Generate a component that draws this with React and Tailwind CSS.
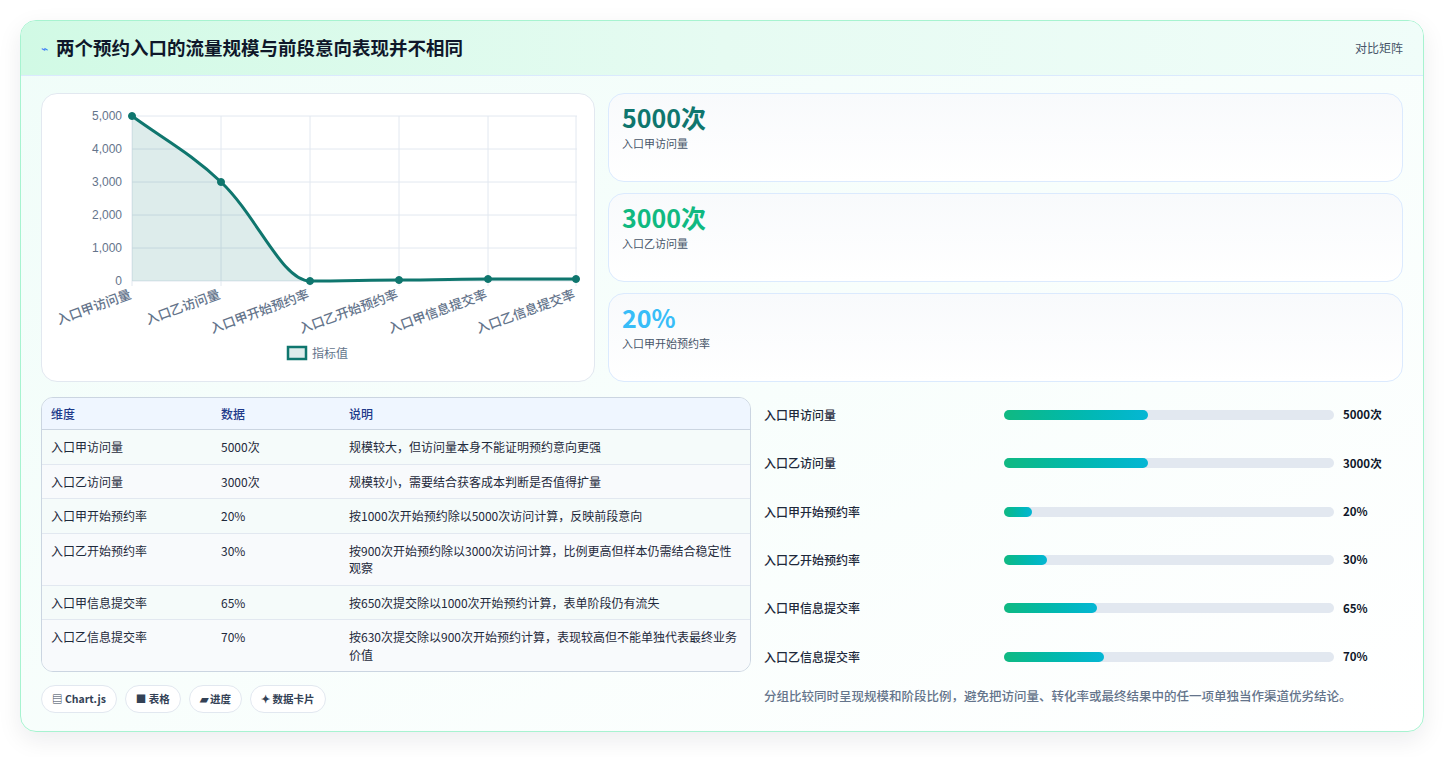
const font = { fontFamily: '"Noto Sans CJK SC", "Noto Sans", sans-serif' };

const kpis = [
  { value: '5000次', label: '入口甲访问量', color: 'text-[#0f766e]' },
  { value: '3000次', label: '入口乙访问量', color: 'text-[#10b981]' },
  { value: '20%', label: '入口甲开始预约率', color: 'text-[#38bdf8]' },
];

const rows = [
  ['入口甲访问量', '5000次', '规模较大，但访问量本身不能证明预约意向更强'],
  ['入口乙访问量', '3000次', '规模较小，需要结合获客成本判断是否值得扩量'],
  ['入口甲开始预约率', '20%', '按1000次开始预约除以5000次访问计算，反映前段意向'],
  ['入口乙开始预约率', '30%', '按900次开始预约除以3000次访问计算，比例更高但样本仍需结合稳定性观察'],
  ['入口甲信息提交率', '65%', '按650次提交除以1000次开始预约计算，表单阶段仍有流失'],
  ['入口乙信息提交率', '70%', '按630次提交除以900次开始预约计算，表现较高但不能单独代表最终业务价值'],
];

const bars = [
  ['入口甲访问量', '5000次', 144],
  ['入口乙访问量', '3000次', 144],
  ['入口甲开始预约率', '20%', 28],
  ['入口乙开始预约率', '30%', 43],
  ['入口甲信息提交率', '65%', 93],
  ['入口乙信息提交率', '70%', 100],
];

function Chart() {
  const xs = [90, 179, 268, 357, 446, 534];
  const ys = [22, 88, 187, 186, 185, 185];
  const labels = ['入口甲访问量', '入口乙访问量', '入口甲开始预约率', '入口乙开始预约率', '入口甲信息提交率', '入口乙信息提交率'];
  const line = 'M90 22 C120 44 150 60 179 88 C215 122 240 187 268 187 C300 187 330 186 357 186 C390 186 420 185 446 185 L534 185';
  return (
    <svg width="553" height="288" className="block">
      {[0, 1, 2, 3, 4, 5].map((i) => (
        <g key={i}>
          <line x1="90" x2="535" y1={22 + i * 33} y2={22 + i * 33} stroke="#e2e8f0" />
          <line x1={xs[i]} x2={xs[i]} y1="22" y2="192" stroke="#e2e8f0" />
          <text x="80" y={26 + i * 33} textAnchor="end" fontSize="12" fill="#64748b" fontFamily="Liberation Sans, sans-serif">
            {['5,000', '4,000', '3,000', '2,000', '1,000', '0'][i]}
          </text>
          <text
            x={xs[i]}
            y="204"
            textAnchor="end"
            fontSize="13"
            fontWeight="500"
            fill="#64748b"
            fontFamily='"Noto Sans CJK SC", sans-serif'
            transform={`rotate(-20 ${xs[i]} 204)`}
          >
            {labels[i]}
          </text>
        </g>
      ))}
      <path d={line + ' L534 187 L90 187 Z'} fill="#0f766e" fillOpacity="0.14" />
      <path d={line} fill="none" stroke="#0f766e" strokeWidth="3" />
      {xs.map((x, i) => (
        <circle key={x} cx={x} cy={ys[i]} r="3.5" fill="#0f766e" stroke="#0f766e" strokeWidth="1" />
      ))}
      <rect x="246" y="253" width="18" height="12" fill="#0f766e" fillOpacity="0.14" stroke="#0f766e" strokeWidth="2.5" />
      <text x="270" y="264" fontSize="12" fill="#64748b" fontFamily='"Noto Sans CJK SC", sans-serif'>指标值</text>
    </svg>
  );
}

export default function App() {
  return (
    <div className="w-[1444px] h-[757px] bg-white p-5 pb-0" style={font}>
      <div className="rounded-2xl border border-[#a7f3d0] overflow-hidden shadow-[0_8px_24px_rgba(15,23,42,0.08)] bg-gradient-to-br from-[#f0fdf9] to-white">
        <div className="h-[55px] flex items-center justify-between px-5 bg-gradient-to-r from-[#d1fae5] via-[#e6fbf2] to-[#f0fdf9] border-b border-[#dbeafe]">
          <div className="flex items-center gap-2">
            <span className="text-[#3b82f6] text-xs">⌁</span>
            <h1 className="text-[18.5px] font-bold text-[#0f172a]">两个预约入口的流量规模与前段意向表现并不相同</h1>
          </div>
          <span className="text-xs text-[#475569]">对比矩阵</span>
        </div>
        <div className="px-5 pt-[17px] pb-[18px]">
          <div className="flex gap-[13px]">
            <div className="w-[554px] h-[289px] rounded-2xl border border-[#e2e8f0] bg-white overflow-hidden">
              <Chart />
            </div>
            <div className="flex-1 flex flex-col gap-[11px]">
              {kpis.map((k) => (
                <div key={k.label} className="h-[89px] rounded-2xl border border-[#dbeafe] bg-gradient-to-b from-[#f8fafc] to-white px-[13px] pt-[5px]">
                  <div className={`text-[25px] font-bold leading-[36px] ${k.color}`}>{k.value}</div>
                  <div className="text-[11px] text-[#475569]">{k.label}</div>
                </div>
              ))}
            </div>
          </div>
          <div className="flex gap-[13px] mt-[15px]">
            <div className="w-[710px]">
              <div className="rounded-xl border border-[#cbd5e1] overflow-hidden text-xs bg-[#f8fafc]">
                <div className="flex h-[32px] items-center bg-[#eff6ff] border-b border-[#cbd5e1] text-[#1e3a8a] font-medium">
                  <div className="w-[179px] pl-[9px]">维度</div>
                  <div className="w-[128px]">数据</div>
                  <div className="flex-1">说明</div>
                </div>
                {rows.map((r, i) => (
                  <div key={r[0]} className={`flex py-[8px] leading-[17.5px] text-[#1e293b] ${i % 2 ? 'bg-[#f8fafc]' : 'bg-[#f5fbfa]'} ${i < 5 ? 'border-b border-[#e2e8f0]' : ''}`}>
                    <div className="w-[179px] pl-[9px] shrink-0">{r[0]}</div>
                    <div className="w-[128px] shrink-0">{r[1]}</div>
                    <div className="flex-1 pr-3">{r[2]}</div>
                  </div>
                ))}
              </div>
              <div className="flex gap-2 mt-[13px]">
                {['▤ Chart.js', '■ 表格', '▰ 进度', '✦ 数据卡片'].map((c) => (
                  <span key={c} className="h-[28px] px-[10px] flex items-center rounded-full border border-[#e2e8f0] bg-white text-[10.5px] font-semibold text-[#334155]">{c}</span>
                ))}
              </div>
            </div>
            <div className="flex-1 -mt-[6px]">
              {bars.map((b) => (
                <div key={b[0]} className="flex items-center h-[48.3px] text-xs">
                  <div className="w-[240px] text-[#1e293b] font-medium">{b[0]}</div>
                  <div className="w-[330px] h-[10px] rounded-full bg-[#e2e8f0]">
                    <div className="h-full rounded-full bg-gradient-to-r from-[#10b981] to-[#06b6d4]" style={{ width: b[2] }} />
                  </div>
                  <div className="ml-[9px] font-bold text-[#0f172a] text-[11.5px]">{b[1]}</div>
                </div>
              ))}
              <p className="text-[12.5px] text-[#64748b] font-medium mt-[6px]">分组比较同时呈现规模和阶段比例，避免把访问量、转化率或最终结果中的任一项单独当作渠道优劣结论。</p>
            </div>
          </div>
        </div>
      </div>
    </div>
  );
}
